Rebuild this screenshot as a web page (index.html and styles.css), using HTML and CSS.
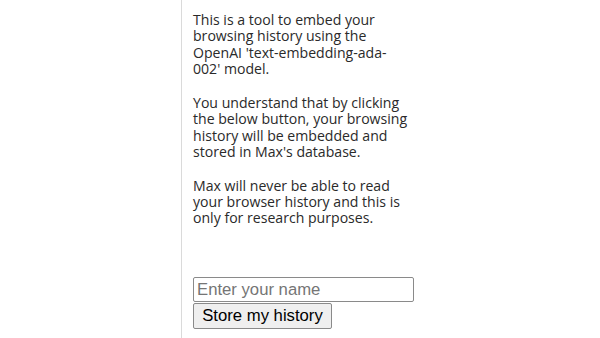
FILE: index.html
```html
<!DOCTYPE html>
<html>
<head>
<meta charset="utf-8">
<link rel="stylesheet" href="styles.css">
</head>
<body>
<div class="popup">
  <p>This is a tool to embed your browsing history using the<br>OpenAI 'text-embedding-ada-002' model.</p>
  <p>You understand that by clicking the below button, your browsing history will be embedded and stored in Max's database.</p>
  <p>Max will never be able to read your browser history and this is only for research purposes.</p>
  <form class="form">
    <input class="name" type="text" placeholder="Enter your name">
    <button class="store" type="button">Store my history</button>
  </form>
</div>
</body>
</html>
```
FILE: styles.css
```css
html, body {
  margin: 0;
  padding: 0;
  background: #fff;
  height: 100%;
}
.popup {
  margin-left: 181px;
  width: 232px;
  height: 100%;
  box-sizing: border-box;
  border-left: 1px solid #dadada;
  padding: 12px 0 0 11px;
  font-family: "Open Sans", "Noto Sans", sans-serif;
  font-size: 14.1px;
  line-height: 16.4px;
  color: #2a2a2a;
}
.popup p {
  margin: 0 0 17.2px 0;
}
.form {
  display: flex;
  flex-direction: column;
  align-items: flex-start;
  padding-top: 33px;
}
.name {
  width: 221px;
  height: 25px;
  box-sizing: border-box;
  border: 1px solid #8a8a8a;
  border-radius: 2px;
  padding: 1px 3px;
  margin: 0;
  font-family: "Liberation Sans", Arial, sans-serif;
  font-size: 16.7px;
}
.name::placeholder {
  color: #757575;
}
.store {
  margin: 1px 0 0 0;
  height: 26px;
  width: 139px;
  box-sizing: border-box;
  border: 1px solid #8a8a8a;
  border-radius: 2px;
  background: #efefef;
  color: #000;
  padding: 0 6px;
  font-family: "Liberation Sans", Arial, sans-serif;
  font-size: 16.7px;
}
```
